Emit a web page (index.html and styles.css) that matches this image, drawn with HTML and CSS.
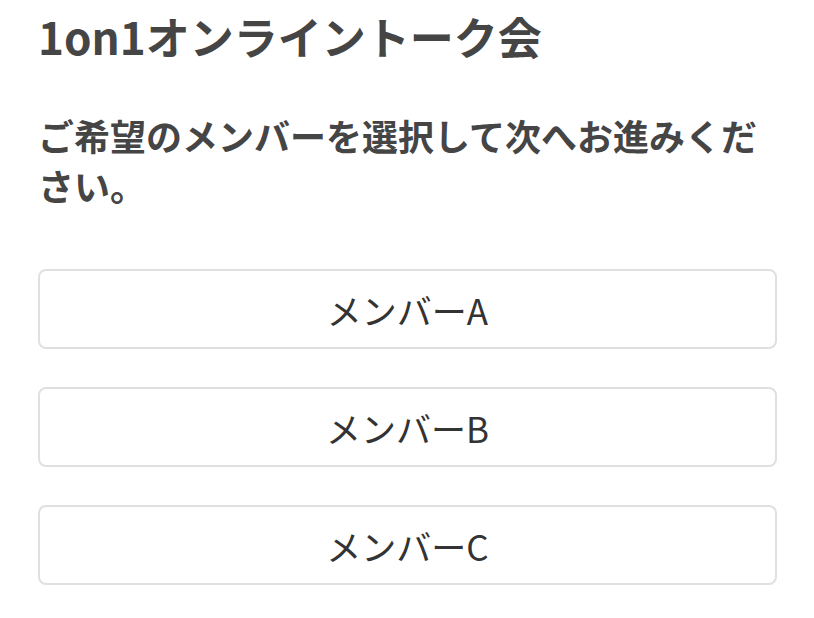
FILE: index.html
```html
<!DOCTYPE html>
<html lang="ja">
<head>
<meta charset="utf-8">
<link rel="stylesheet" href="styles.css">
</head>
<body>
<main class="page">
  <h1 class="title">1on1オンライントーク会</h1>
  <p class="lead">ご希望のメンバーを選択して次へお進みください。</p>
  <div class="members">
    <button class="member">メンバーA</button>
    <button class="member">メンバーB</button>
    <button class="member">メンバーC</button>
  </div>
</main>
</body>
</html>
```
FILE: styles.css
```css
html, body {
  margin: 0;
  padding: 0;
  background: #fff;
}
.page {
  padding: 8px 37px 0 38px;
  font-family: "Noto Sans CJK JP", "Noto Sans", sans-serif;
  color: #444;
}
.title {
  margin: 0;
  font-size: 44px;
  font-weight: 700;
  line-height: 56px;
  color: #454545;
}
.lead {
  margin: 46px 0 0;
  font-size: 36px;
  font-weight: 700;
  line-height: 50px;
  color: #454545;
}
.members {
  margin-top: 59px;
  display: flex;
  flex-direction: column;
  gap: 38px;
}
.member {
  height: 80px;
  background: #fff;
  border: 2px solid #e0e0e0;
  border-radius: 8px;
  font-family: "Noto Sans CJK JP", "Noto Sans", sans-serif;
  font-size: 35px;
  font-weight: 400;
  color: #333;
  padding: 0;
}
```
